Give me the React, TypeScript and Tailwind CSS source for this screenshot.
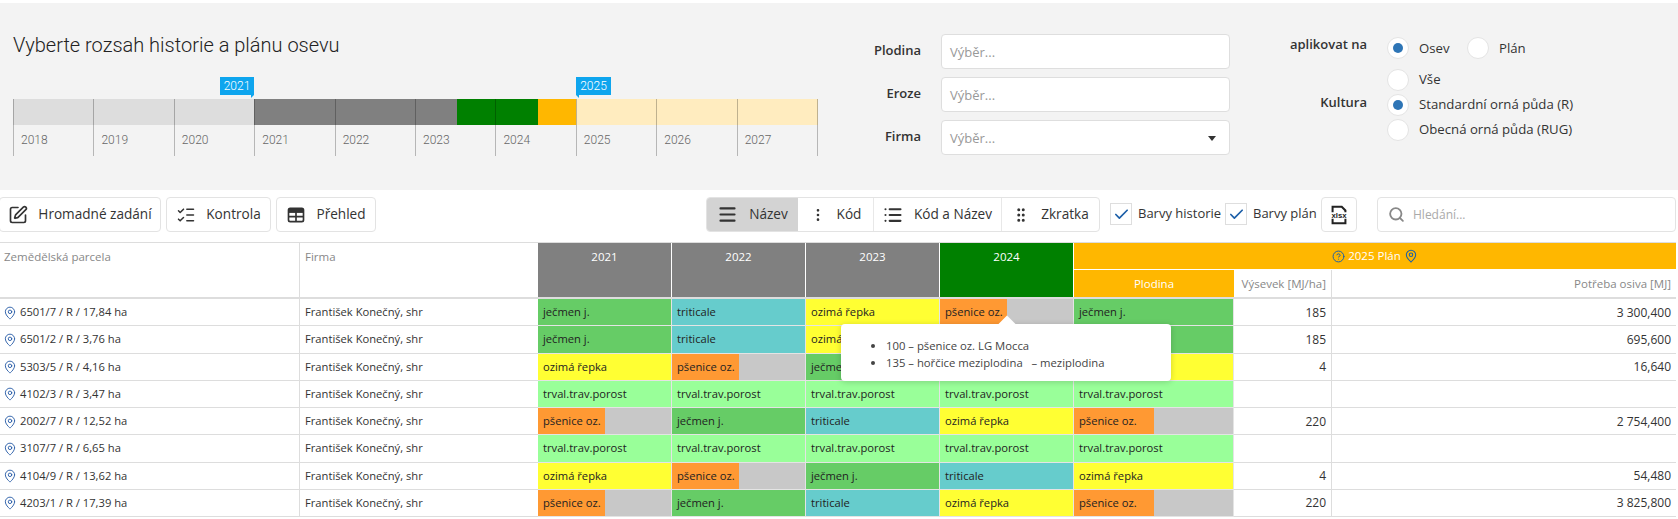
import React from 'react';
import {
  SquarePen,
  ListChecks,
  Menu,
  EllipsisVertical,
  List,
  GripVertical,
  Check,
  Search,
  MapPin,
  CircleHelp,
} from 'lucide-react';

type Crop = 'jecmen' | 'triticale' | 'repka' | 'psenice' | 'trval';

const cropStyle: Record<Crop, { label: string; cls: string }> = {
  jecmen: { label: 'ječmen j.', cls: 'bg-[#66cc66]' },
  triticale: { label: 'triticale', cls: 'bg-[#66cccc]' },
  repka: { label: 'ozimá řepka', cls: 'bg-[#ffff33]' },
  psenice: { label: 'pšenice oz.', cls: 'bg-[#ff9933] w-1/2' },
  trval: { label: 'trval.trav.porost', cls: 'bg-[#99ff99]' },
};

const rows: { parcel: string; crops: Crop[]; seed: string; need: string }[] = [
  { parcel: '6501/7 / R / 17,84 ha', crops: ['jecmen', 'triticale', 'repka', 'psenice', 'jecmen'], seed: '185', need: '3 300,400' },
  { parcel: '6501/2 / R / 3,76 ha', crops: ['jecmen', 'triticale', 'repka', 'psenice', 'jecmen'], seed: '185', need: '695,600' },
  { parcel: '5303/5 / R / 4,16 ha', crops: ['repka', 'psenice', 'jecmen', 'triticale', 'repka'], seed: '4', need: '16,640' },
  { parcel: '4102/3 / R / 3,47 ha', crops: ['trval', 'trval', 'trval', 'trval', 'trval'], seed: '', need: '' },
  { parcel: '2002/7 / R / 12,52 ha', crops: ['psenice', 'jecmen', 'triticale', 'repka', 'psenice'], seed: '220', need: '2 754,400' },
  { parcel: '3107/7 / R / 6,65 ha', crops: ['trval', 'trval', 'trval', 'trval', 'trval'], seed: '', need: '' },
  { parcel: '4104/9 / R / 13,62 ha', crops: ['repka', 'psenice', 'jecmen', 'triticale', 'repka'], seed: '4', need: '54,480' },
  { parcel: '4203/1 / R / 17,39 ha', crops: ['psenice', 'jecmen', 'triticale', 'repka', 'psenice'], seed: '220', need: '3 825,800' },
];

const years = ['2018', '2019', '2020', '2021', '2022', '2023', '2024', '2025', '2026', '2027'];

const Slider = () => (
  <div className="relative h-[79px] w-[805px] font-['Roboto',sans-serif] font-light">
    <div className="h-[22px]">
      <div className="absolute left-[207px] top-0 flex h-[18px] w-[34px] items-center justify-center bg-[#0ea5ee] text-xs text-white">2021</div>
      <div className="absolute left-[207px] top-[18px] ml-[31px] h-0 w-0 border-b-[3px] border-l-[3px] border-b-transparent border-l-[#0ea5ee]" />
      <div className="absolute left-[563px] top-0 flex h-[18px] w-[35px] items-center justify-center bg-[#0ea5ee] text-xs text-white">2025</div>
      <div className="absolute left-[563px] top-[18px] h-0 w-0 border-b-[3px] border-r-[3px] border-b-transparent border-r-[#0ea5ee]" />
    </div>
    <div className="flex h-[26px]">
      <div className="w-[241px] bg-[#dddddd]" />
      <div className="w-[203px] bg-[#808080]" />
      <div className="w-[81px] bg-[#008000]" />
      <div className="w-[38px] bg-[#ffb700]" />
      <div className="w-[242px] bg-[#ffecbf]" />
    </div>
    <div className="absolute inset-x-0 bottom-0 top-[22px] flex">
      {years.map((y, i) => (
        <div
          key={y}
          className={`flex flex-1 items-end border-l border-black/25 pb-[8px] pl-[7px] text-xs text-[#666] ${i === 9 ? 'border-r' : ''}`}
        >
          {y}
        </div>
      ))}
    </div>
  </div>
);

const Radio = ({ on }: { on?: boolean }) => (
  <span className="flex h-[22px] w-[22px] shrink-0 items-center justify-center rounded-full border border-[#e4e4e4] bg-white">
    {on && <span className="h-[10px] w-[10px] rounded-full bg-[#2e75b6]" />}
  </span>
);

const Field = ({ label, arrow }: { label: string; arrow?: boolean }) => (
  <div className="flex items-center">
    <div className="w-[91px] pb-[2px] text-right text-[13px] font-semibold text-[#333]">{label}</div>
    <div className="ml-[20px] flex h-[35px] w-[289px] items-center justify-between rounded border border-[#dedede] bg-white pl-[8px] pr-[13px] pt-[2px] text-[13px] text-[#999]">
      <span>Výběr...</span>
      {arrow && <span className="h-0 w-0 border-x-4 border-t-[5px] border-x-transparent border-t-[#333]" />}
    </div>
  </div>
);

const ToolButton = ({ icon, label, cls }: { icon: React.ReactNode; label: string; cls: string }) => (
  <div className={`flex h-[35px] items-center justify-center gap-[10px] rounded border border-[#e3e3e3] bg-white text-[13.6px] text-[#333] ${cls}`}>
    {icon}
    <span>{label}</span>
  </div>
);

const ViewTab = ({ icon, label, cls }: { icon: React.ReactNode; label: string; cls: string }) => (
  <div className={`flex h-full items-center justify-center gap-[11px] text-[13.6px] text-[#333] ${cls}`}>
    {icon}
    <span>{label}</span>
  </div>
);

const CheckBox = ({ label, cls }: { label: string; cls: string }) => (
  <div className={`flex items-center gap-[6px] whitespace-nowrap text-[13px] text-[#333] ${cls}`}>
    <span className="flex h-[22px] w-[22px] shrink-0 items-center justify-center border border-[#dedede] bg-white">
      <Check size={17} strokeWidth={2.4} className="text-[#1c5fa8]" />
    </span>
    <span>{label}</span>
  </div>
);

const CropCell = ({ crop }: { crop: Crop }) => {
  const s = cropStyle[crop];
  return (
    <div className="flex border-b border-r border-[#e4e4e4] bg-[#c8c8c8]">
      <div className={`flex items-center whitespace-nowrap pl-[5px] pt-[1px] text-[11.2px] text-[#222] ${s.cls} ${crop === 'psenice' ? '' : 'w-full'}`}>
        {s.label}
      </div>
    </div>
  );
};

export default function App() {
  return (
    <div className="w-[1678px] bg-white pt-[3px] font-['Open_Sans',sans-serif] text-[#333]">
      <div className="flex h-[187px] bg-[#f3f3f3]">
        <div className="w-[830px] pl-[13px] pt-[28px]">
          <h1 className="mb-[18px] h-[28px] font-['Roboto',sans-serif] text-[20px] font-light leading-[28px] text-[#222]">
            Vyberte rozsah historie a plánu osevu
          </h1>
          <Slider />
        </div>

        <div className="flex w-[400px] flex-col gap-[8px] pt-[31px]">
          <Field label="Plodina" />
          <Field label="Eroze" />
          <Field label="Firma" arrow />
        </div>

        <div className="ml-[10px] pt-[33px] text-[13.2px]">
          <div className="flex h-[24px] items-center">
            <div className="w-[127px] pb-[6px] text-right text-[13px] font-semibold">aplikovat na</div>
            <div className="ml-[20px] flex items-center">
              <Radio on />
              <span className="ml-[10px] w-[48px] pt-[2px]">Osev</span>
              <Radio />
              <span className="ml-[10px] pt-[2px]">Plán</span>
            </div>
          </div>
          <div className="mt-[7px] flex items-center">
            <div className="w-[127px] pb-[4px] text-right text-[13px] font-semibold">Kultura</div>
            <div className="ml-[20px] flex flex-col">
              {[
                { label: 'Vše', on: false },
                { label: 'Standardní orná půda (R)', on: true },
                { label: 'Obecná orná půda (RUG)', on: false },
              ].map((r) => (
                <div key={r.label} className="flex h-[25px] items-center">
                  <Radio on={r.on} />
                  <span className="ml-[10px] pt-[1px]">{r.label}</span>
                </div>
              ))}
            </div>
          </div>
        </div>
      </div>

      <div className="flex h-[52px] items-start pt-[7px]">
        <ToolButton cls="ml-[-1px] w-[162px]" icon={<SquarePen size={20} strokeWidth={2} />} label="Hromadné zadání" />
        <ToolButton cls="ml-[5px] w-[105px]" icon={<ListChecks size={20} strokeWidth={1.8} />} label="Kontrola" />
        <ToolButton
          cls="ml-[5px] w-[100px]"
          icon={
            <svg width="20" height="20" viewBox="0 0 24 24" fill="none" stroke="currentColor" strokeWidth="2">
              <rect x="3" y="4" width="18" height="16" rx="2" />
              <path d="M3 7h18" strokeWidth="5" />
              <path d="M3 14h18M12 8v12" />
            </svg>
          }
          label="Přehled"
        />

        <div className="ml-[330px] flex h-[35px] w-[394px] overflow-hidden rounded border border-[#e3e3e3] bg-white">
          <ViewTab cls="w-[91px] bg-[#d3d3d3]" icon={<Menu size={21} strokeWidth={2.5} />} label="Název" />
          <ViewTab cls="w-[76px] border-r border-[#e8e8e8]" icon={<EllipsisVertical size={16} strokeWidth={2} />} label="Kód" />
          <ViewTab cls="w-[128px] border-r border-[#e8e8e8]" icon={<List size={20} strokeWidth={2.5} />} label="Kód a Název" />
          <ViewTab cls="flex-1" icon={<GripVertical size={18} strokeWidth={2} />} label="Zkratka" />
        </div>

        <CheckBox cls="ml-[10px] mt-[6px] w-[115px]" label="Barvy historie" />
        <CheckBox cls="mt-[6px] w-[96px]" label="Barvy plán" />

        <div className="flex h-[35px] w-[36px] items-center justify-center rounded border border-[#e3e3e3] bg-white">
          <svg width="22" height="22" viewBox="0 0 24 24" fill="none" stroke="#222" strokeWidth="2.2">
            <path d="M5 9V3h10l4 4v2M5 16v5h14v-5" />
            <text x="12" y="15.5" textAnchor="middle" fontSize="8.5" fontWeight="700" fill="#222" stroke="none" fontFamily="'Liberation Sans', sans-serif">xlsx</text>
          </svg>
        </div>

        <div className="ml-[20px] flex h-[35px] w-[299px] items-center rounded border border-[#e3e3e3] bg-white pl-[10px] text-xs text-[#aaa]">
          <Search size={17} strokeWidth={2.6} className="text-[#888]" />
          <span className="ml-[8px]">Hledání...</span>
        </div>
      </div>

      <div className="relative w-[1676px]">
        <div className="grid h-[57px] grid-cols-[300px_238px_134px_134px_134px_134px_160px_98px_344px] grid-rows-[27px_27px] border-b-2 border-t border-[#dddddd] text-[11.5px] text-[#888]">
          <div className="row-span-2 border-r border-[#dddddd] pl-[4px] pt-[5px]">Zemědělská parcela</div>
          <div className="row-span-2 pl-[5px] pt-[5px]">Firma</div>
          <div className="row-span-2 border-r border-white bg-[#808080] pt-[5px] text-center text-white">2021</div>
          <div className="row-span-2 border-r border-white bg-[#808080] pt-[5px] text-center text-white">2022</div>
          <div className="row-span-2 border-r border-white bg-[#808080] pt-[5px] text-center text-white">2023</div>
          <div className="row-span-2 border-r border-white bg-[#008000] pt-[5px] text-center text-white">2024</div>
          <div className="col-span-3 flex items-center justify-center gap-[3px] border-b border-white bg-[#ffb700] text-white">
            <CircleHelp size={13} strokeWidth={1.8} className="text-[#1c5fa8]" />
            <span>2025 Plán</span>
            <MapPin size={14} strokeWidth={1.8} className="text-[#1c5fa8]" />
          </div>
          <div className="flex items-center justify-center bg-[#ffb700] text-white">Plodina</div>
          <div className="flex items-center justify-end border-r border-[#dddddd] pr-[5px]">Výsevek [MJ/ha]</div>
          <div className="flex items-center justify-end pr-[5px]">Potřeba osiva [MJ]</div>
        </div>

        {rows.map((r) => (
          <div
            key={r.parcel}
            className="grid h-[27.25px] grid-cols-[300px_238px_134px_134px_134px_134px_160px_98px_344px] text-[11.2px] text-[#333]"
          >
            <div className="flex items-center gap-[3px] border-b border-r border-[#dddddd] pl-[3px] pt-[1px]">
              <MapPin size={14} strokeWidth={1.6} className="text-[#2a5ea8]" />
              <span>{r.parcel}</span>
            </div>
            <div className="flex items-center border-b border-[#dddddd] pl-[5px] pt-[1px]">František Konečný, shr</div>
            {r.crops.map((c, i) => (
              <CropCell key={i} crop={c} />
            ))}
            <div className="flex items-center justify-end border-b border-r border-[#dddddd] pr-[5px] pt-[1px] text-xs">{r.seed}</div>
            <div className="flex items-center justify-end border-b border-[#dddddd] pr-[5px] pt-[1px] text-xs">{r.need}</div>
          </div>
        ))}

        <div className="absolute left-[841px] top-[82px] h-[57px] w-[330px] rounded bg-white pl-[31px] pt-[13px] text-[11.3px] leading-[17px] text-[#444] shadow-[0_1px_6px_rgba(0,0,0,0.18)]">
          <div className="absolute left-[160px] top-[-6px] h-[12px] w-[12px] rotate-45 bg-white" />
          <ul className="list-disc pl-[14px]">
            <li>100 – pšenice oz. LG Mocca</li>
            <li>135 – hořčice meziplodina &nbsp; – meziplodina</li>
          </ul>
        </div>
      </div>
    </div>
  );
}
